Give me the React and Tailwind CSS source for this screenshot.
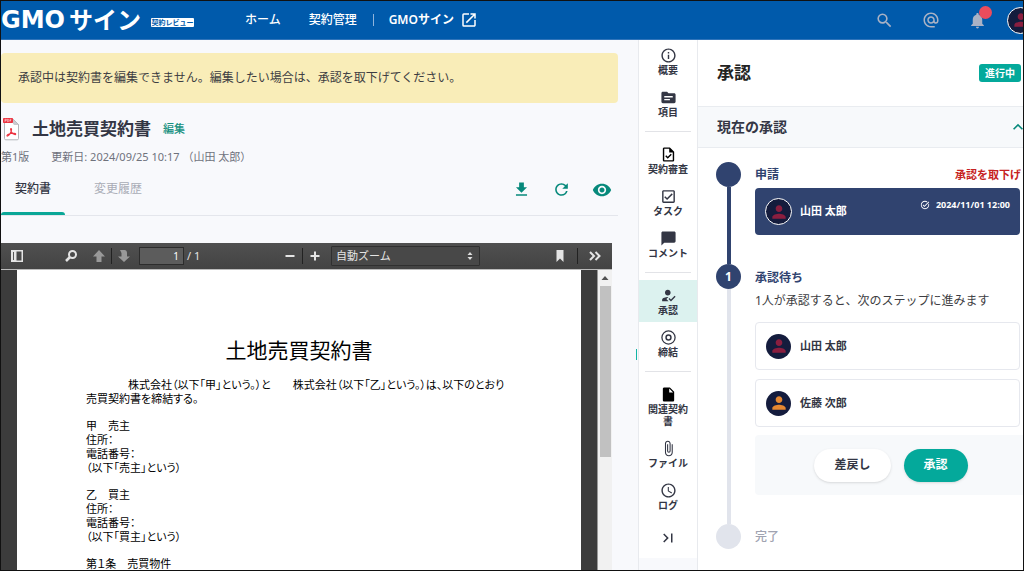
import React from "react";
import {
  MdSearch,
  MdAlternateEmail,
  MdNotifications,
  MdOpenInNew,
  MdInfoOutline,
  MdSource,
  MdOutlineTask,
  MdOutlineCheckBox,
  MdChatBubble,
  MdHowToReg,
  MdInsertDriveFile,
  MdAttachFile,
  MdAccessTime,
  MdLastPage,
  MdDownload,
  MdRefresh,
  MdVisibility,
  MdPerson,
  MdTaskAlt,
  MdKeyboardArrowUp,
} from "react-icons/md";

function SealIcon({ className }) {
  return (
    <svg viewBox="0 0 16 16" className={className} fill="none" stroke="currentColor" aria-hidden="true">
      <circle cx="8" cy="8" r="6.2" strokeWidth="1.2" />
      <circle cx="8" cy="8" r="2.3" strokeWidth="1.4" />
    </svg>
  );
}

function PdfFileIcon() {
  return (
    <svg viewBox="0 0 17 23" className="h-[23px] w-[17px]" fill="none" aria-hidden="true">
      <path d="M1.5 4v16.5c0 .8.5 1.3 1.3 1.3h11.4c.8 0 1.3-.5 1.3-1.3V6.5L10.500 1.500H9.500" fill="#fff" stroke="#b3b5ba" />
      <path d="M10.500 1.500v4c0 .6.4 1 1 1h4z" fill="#c9cbd0" stroke="#b3b5ba" strokeWidth=".6" />
      <rect x="0" y="0" width="10" height="5" rx=".8" fill="#ec3340" />
      <path d="M2 3.800V1.300h.9c.9 0 .9 1.300 0 1.300H2M4.400 1.300v2.400h.5c1.300 0 1.300-2.400 0-2.400zM7 3.800V1.300h1.300M7 2.500h1.100" stroke="#fff" strokeWidth=".5" />
      <path d="M8 10.500c1.200 0 .3 3-.8 4.900-1 1.800-2.700 3.200-3.200 2.500-.5-.8 1.600-1.900 3.900-2.400 2.300-.5 4.900-.4 4.800.6-.2 1.200-2.600 0-3.800-1.500C7.800 13 7.100 10.500 8 10.500z" stroke="#ec3340" strokeWidth="1.100" />
    </svg>
  );
}

const ICONS = {
  sidebar: (
    <>
      <path fillRule="evenodd" d="M2 2h12v12H2zM7.500 3.500v9h5v-9z" />
      <path d="M4 4h1v8H4z" fill="#555" />
    </>
  ),
  find: (
    <>
      <circle cx="9.500" cy="6.500" r="3.500" fill="none" stroke="currentColor" strokeWidth="2" />
      <path d="M7 9l-4 4" stroke="currentColor" strokeWidth="2.500" />
    </>
  ),
  up: <path d="M8 2l6 6.500h-3.500V14h-5V8.500H2z" />,
  down: <path d="M8 14L2 8.500h3.500V5L4 2h4.500c1.500 0 2.500 1 2.500 3v3.500h3z" />,
  minus: <path d="M3.500 7h9v2h-9z" />,
  plus: <path d="M7 3.500h2V7h3.500v2H9v3.500H7V9H3.500V7H7z" />,
  bookmark: <path d="M4.500 2h7v12L8 10.500 4.500 14z" />,
  more: <path d="M3 4l4 4-4 4M8.500 4l4 4-4 4" fill="none" stroke="currentColor" strokeWidth="2" />,
};

function ToolButton({ icon, label, dim }) {
  return (
    <button type="button" aria-label={label} className={dim ? "text-[#999]" : "text-[#e4e4e4]"}>
      <svg viewBox="0 0 16 16" className="size-4" fill="currentColor" aria-hidden="true">
        {ICONS[icon]}
      </svg>
    </button>
  );
}

function Separator() {
  return <span className="h-4 w-px bg-[#222]" />;
}

function Avatar({ tone = "text-[#8a1e3f]", ring = "size-[25px]" }) {
  return (
    <span className={`flex shrink-0 items-center justify-center rounded-full bg-[#141c3d] ${ring}`}>
      <MdPerson className={`size-5 ${tone}`} />
    </span>
  );
}

function Header() {
  return (
    <header className="flex h-[39px] shrink-0 items-center overflow-hidden border-b border-[#2f74ba] bg-[#005aab] text-xs text-white">
      <a href="#top" className="flex w-[150px] shrink-0 items-center gap-1 font-bold leading-none">
        <span className="font-['DejaVu_Sans'] text-[24px]">GMO</span>
        <span className="text-[24px]">サイン</span>
      </a>
      <span className="mt-1 flex h-[9px] w-[43px] shrink-0 items-center justify-center rounded-[1px] bg-white text-[7px] font-bold leading-none text-[#005aab]">
        契約レビュー
      </span>
      <nav className="ml-[51px] flex shrink-0 items-center font-medium">
        <a href="#home">ホーム</a>
        <a href="#contracts" className="ml-7">契約管理</a>
        <span className="ml-4 h-3 w-px bg-[#8fb4dc]" />
        <a href="#sign" className="ml-[15px] flex items-center gap-[6px] font-semibold">
          GMOサイン
          <MdOpenInNew className="size-[18px] font-normal" />
        </a>
      </nav>
      <div className="ml-auto flex shrink-0 items-center text-[#a9b2c5]">
        <button type="button" aria-label="検索">
          <MdSearch className="size-[19px]" />
        </button>
        <button type="button" aria-label="メンション" className="ml-7">
          <MdAlternateEmail className="size-[18px]" />
        </button>
        <button type="button" aria-label="通知" className="relative ml-7">
          <MdNotifications className="size-[19px]" />
          <span className="absolute -top-[5px] left-[11px] size-[13px] rounded-full bg-[#ec4c5c]" />
        </button>
        <button type="button" aria-label="アカウント" className="ml-5 flex w-4 overflow-hidden">
          <Avatar ring="size-[27px] border border-white" />
        </button>
      </div>
    </header>
  );
}

const CONTRACT_GROUPS = [
  ["甲　売主", "住所：", "電話番号：", "（以下「売主」という）"],
  ["乙　買主", "住所：", "電話番号：", "（以下「買主」という）"],
  ["第１条　売買物件"],
];

function PdfViewer() {
  return (
    <section aria-label="契約書プレビュー" className="mr-[26px] mt-[27px] flex min-h-0 flex-1 flex-col">
      <div className="flex h-[26px] shrink-0 items-center bg-linear-to-b from-[#505050] to-[#434343] pl-2 pr-[9px] text-[11px] text-[#e4e4e4]">
        <ToolButton icon="sidebar" label="サイドバー" />
        <div className="ml-[38px] flex items-center">
          <ToolButton icon="find" label="検索" />
          <div className="ml-3 flex items-center gap-1">
            <ToolButton icon="up" label="前のページ" dim />
            <Separator />
            <ToolButton icon="down" label="次のページ" dim />
          </div>
          <input
            aria-label="ページ"
            defaultValue="1"
            className="ml-[7px] h-[18px] w-[45px] border border-[#2c2c2c] bg-[#5c5c5c] pr-1 text-right text-[10px] text-white"
          />
          <span className="ml-[3px]">/ 1</span>
        </div>
        <div className="ml-auto flex items-center gap-1">
          <ToolButton icon="minus" label="縮小" />
          <Separator />
          <ToolButton icon="plus" label="拡大" />
          <div className="relative ml-1 flex items-center">
            <select
              aria-label="ズーム"
              className="h-5 w-[149px] appearance-none rounded-[1px] border border-[#303030] bg-[#484848] pl-1 text-[11px] leading-4 text-[#e4e4e4]"
            >
              <option>自動ズーム</option>
            </select>
            <svg viewBox="0 0 6 8" className="pointer-events-none absolute right-[7px] h-2 w-1.5" fill="#ddd" aria-hidden="true">
              <path d="M3 0l2.500 3h-5zM3 8L.5 5h5z" />
            </svg>
          </div>
        </div>
        <div className="ml-[72px] flex items-center gap-[9px]">
          <ToolButton icon="bookmark" label="しおり" />
          <Separator />
          <ToolButton icon="more" label="ツール" />
        </div>
      </div>
      <div className="flex min-h-0 flex-1 border-t border-[#bbb] bg-[#3c3c3c]">
        <article className="ml-4 mr-4 flex-1 overflow-hidden bg-white px-[69px] pt-[66px] text-[11px] leading-[14px] text-black [font-feature-settings:'palt']">
          <h2 className="text-center text-[21px] leading-[28px]">土地売買契約書</h2>
          <p className="mt-[14px] whitespace-nowrap indent-[42px]">
            株式会社（以下「甲」という。）と　　株式会社（以下「乙」という。）は、以下のとおり
          </p>
          <p>売買契約書を締結する。</p>
          {CONTRACT_GROUPS.map((lines) => (
            <div key={lines[0]} className="mt-[13px]">
              {lines.map((line) => (
                <p key={line}>{line}</p>
              ))}
            </div>
          ))}
        </article>
        <div className="flex w-[15px] flex-col items-center border-l border-[#999] bg-[#f1f1f1]">
          <svg viewBox="0 0 8 4" className="my-[6px] h-1 w-2" fill="#505050" aria-hidden="true">
            <path d="M4 0l3.500 4h-7z" />
          </svg>
          <span className="h-[171px] w-[11px] bg-[#c1c1c1]" />
        </div>
      </div>
    </section>
  );
}

function ContractPane() {
  return (
    <main className="relative flex min-w-0 flex-1 flex-col bg-[#f8f9fc]">
      <p className="mr-5 mt-[13px] flex h-[50px] shrink-0 items-center rounded bg-[#f9edb8] px-[17px] text-xs text-[#3d3d42]">
        承認中は契約書を編集できません。編集したい場合は、承認を取下げてください。
      </p>
      <div className="mt-3 flex h-7 shrink-0 items-center pl-[2px]">
        <PdfFileIcon />
        <h1 className="ml-3 text-[17px] font-bold leading-6">土地売買契約書</h1>
        <a href="#edit" className="ml-3 text-[11px] font-medium text-[#169080]">編集</a>
      </div>
      <div className="mt-[6px] flex h-4 shrink-0 items-center gap-[22px] text-[11px] text-[#6f727c]">
        <span>第1版</span>
        <span>更新日: 2024/09/25 10:17 （山田 太郎）</span>
      </div>
      <div className="mr-5 flex h-[51px] shrink-0 items-stretch border-b border-[#e4e6ec] text-xs">
        <button type="button" className="flex w-16 flex-col items-center justify-between font-medium">
          <span className="pt-4 leading-4">契約書</span>
          <span className="h-[3px] w-full rounded-t bg-[#0aa797]" />
        </button>
        <button type="button" className="ml-[29px] flex items-start pt-4 leading-4 text-[#a9acb6]">
          変更履歴
        </button>
        <div className="ml-auto flex items-start gap-[21px] pr-[6px] pt-[15px] text-[#07897b]">
          <button type="button" aria-label="ダウンロード">
            <MdDownload className="size-[19px]" />
          </button>
          <button type="button" aria-label="更新">
            <MdRefresh className="size-[19px]" />
          </button>
          <button type="button" aria-label="表示">
            <MdVisibility className="size-5" />
          </button>
        </div>
      </div>
      <PdfViewer />
      <span className="absolute right-[1px] top-[309px] h-[11px] w-px bg-[#12b5a5]" />
    </main>
  );
}

const RAIL_GROUPS = [
  [
    { label: "概要", Icon: MdInfoOutline },
    { label: "項目", Icon: MdSource },
  ],
  [
    { label: "契約審査", Icon: MdOutlineTask, dark: true },
    { label: "タスク", Icon: MdOutlineCheckBox },
    { label: "コメント", Icon: MdChatBubble },
  ],
  [
    { label: "承認", Icon: MdHowToReg, active: true },
    { label: "締結", Icon: SealIcon },
  ],
  [
    { label: "関連契約書", Icon: MdInsertDriveFile, dark: true },
    { label: "ファイル", Icon: MdAttachFile },
    { label: "ログ", Icon: MdAccessTime },
  ],
];

function Rail() {
  return (
    <aside className="w-[60px] shrink-0 border-x border-[#e8eaee] bg-[#f8f9fc]">
      <div className="bg-white">
        {RAIL_GROUPS.map((items, i) => (
          <React.Fragment key={items[0].label}>
            {i > 0 && <hr className="mx-[6px] my-[7px] border-[#e2e3e7]" />}
            {items.map(({ label, Icon, active, dark }) => (
              <button
                key={label}
                type="button"
                className={`flex w-full flex-col items-center px-2 pb-[6px] pt-[7px] text-[10px] font-bold leading-3 ${
                  active ? "bg-[#dcf2ef]" : ""
                }`}
              >
                <Icon className={dark ? "size-[17px] text-black" : "size-[17px]"} />
                <span>{label}</span>
              </button>
            ))}
          </React.Fragment>
        ))}
        <button type="button" aria-label="閉じる" className="flex h-[41px] w-full items-center justify-center">
          <MdLastPage className="size-[18px]" />
        </button>
      </div>
    </aside>
  );
}

function Step({ marker, dot, line, height, children }) {
  return (
    <li className={`flex gap-[14px] ${height}`}>
      <div className="flex w-[25px] shrink-0 flex-col items-center">
        <span className={`flex size-[25px] shrink-0 items-center justify-center rounded-full text-xs font-bold text-white ${dot}`}>
          {marker}
        </span>
        {line && <span className={`w-1 flex-1 ${line}`} />}
      </div>
      <div className="min-w-0 flex-1">{children}</div>
    </li>
  );
}

function Approver({ name, tone }) {
  return (
    <div className="mr-[3px] flex h-12 items-center gap-[9px] rounded border border-[#e6e8ee] px-[10px] text-[11px] font-bold">
      <Avatar tone={tone} />
      {name}
    </div>
  );
}

function ApprovalPanel() {
  return (
    <section className="w-[325px] shrink-0 overflow-hidden bg-white">
      <div className="flex h-[66px] items-center justify-between pl-[19px] pr-[2px]">
        <h2 className="text-[17px] font-bold text-[#222]">承認</h2>
        <span className="flex h-[18px] items-center rounded-[3px] bg-[#04a99b] px-[6px] text-[10px] font-bold text-white">進行中</span>
      </div>
      <div className="flex h-[42px] items-center justify-between border-y border-[#e9ecf0] bg-[#f7f9fb] pl-[19px]">
        <h3 className="text-sm font-bold">現在の承認</h3>
        <button type="button" aria-label="折りたたむ" className="flex w-[15px] overflow-hidden text-[#07897b]">
          <MdKeyboardArrowUp className="size-5 shrink-0" />
        </button>
      </div>
      <ol className="pl-[18px] pt-[14px]">
        <Step dot="bg-[#30436f]" line="bg-[#30436f]" height="h-[102px]">
          <div className="flex h-[26px] items-center justify-between pr-[2px]">
            <h4 className="text-xs font-bold text-[#30436f]">申請</h4>
            <button type="button" className="text-[11px] font-bold text-[#c62121]">承認を取下げ</button>
          </div>
          <div className="mr-[3px] flex h-[47px] items-center gap-2 rounded bg-[#30436f] px-[10px] text-[11px] font-bold text-white">
            <Avatar ring="size-[27px] border border-white" />
            <span>山田 太郎</span>
            <span className="ml-auto flex items-center gap-[6px] self-start pt-[11px] text-[9px] leading-3">
              <MdTaskAlt className="size-[10px]" />
              2024/11/01 12:00
            </span>
          </div>
        </Step>
        <Step marker="1" dot="bg-[#30436f]" line="bg-[#e1e4ec]" height="h-[260px]">
          <h4 className="text-xs font-bold leading-[27px] text-[#30436f]">承認待ち</h4>
          <p className="text-xs leading-5 text-[#3d3d42]">1人が承認すると、次のステップに進みます</p>
          <div className="mt-[11px] flex flex-col gap-[9px]">
            <Approver name="山田 太郎" />
            <Approver name="佐藤 次郎" tone="text-[#e58731]" />
          </div>
          <div className="mt-2 flex h-[60px] items-center justify-center gap-[13px] rounded-l bg-[#f7f9fb] pl-1">
            <button type="button" className="h-[33px] rounded-full bg-white px-5 text-xs font-bold shadow">差戻し</button>
            <button type="button" className="h-[33px] rounded-full bg-[#04a99b] px-5 text-xs font-bold text-white shadow">承認</button>
          </div>
        </Step>
        <Step dot="bg-[#e1e4ec]" height="h-[26px]">
          <p className="text-xs font-medium leading-[26px] text-[#a0a3b1]">完了</p>
        </Step>
      </ol>
    </section>
  );
}

export default function App() {
  return (
    <div
      id="top"
      className="flex h-screen flex-col overflow-hidden border border-[#111] font-['Noto_Sans','Noto_Sans_CJK_JP',sans-serif] text-[#333644]"
    >
      <Header />
      <div className="flex min-h-0 flex-1">
        <ContractPane />
        <Rail />
        <ApprovalPanel />
      </div>
    </div>
  );
}
